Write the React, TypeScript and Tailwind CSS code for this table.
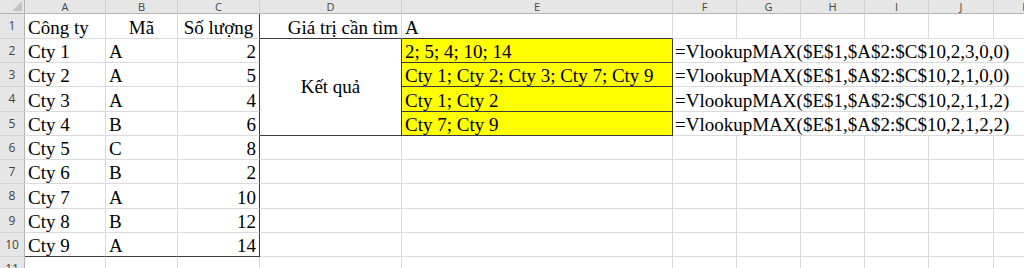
// Bảng tính Excel: VlookupMAX
const cols = ['A', 'B', 'C', 'D', 'E', 'F', 'G', 'H', 'I', 'J', 'K'];

const table: [string, string, string][] = [
  ['Cty 1', 'A', '2'],
  ['Cty 2', 'A', '5'],
  ['Cty 3', 'A', '4'],
  ['Cty 4', 'B', '6'],
  ['Cty 5', 'C', '8'],
  ['Cty 6', 'B', '2'],
  ['Cty 7', 'A', '10'],
  ['Cty 8', 'B', '12'],
  ['Cty 9', 'A', '14'],
];

const results = [
  '2; 5; 4; 10; 14',
  'Cty 1; Cty 2; Cty 3; Cty 7; Cty 9',
  'Cty 1; Cty 2',
  'Cty 7; Cty 9',
];

const formulas = [
  '=VlookupMAX($E$1,$A$2:$C$10,2,3,0,0)',
  '=VlookupMAX($E$1,$A$2:$C$10,2,1,0,0)',
  '=VlookupMAX($E$1,$A$2:$C$10,2,1,1,2)',
  '=VlookupMAX($E$1,$A$2:$C$10,2,1,2,2)',
];

const hdrFont = { fontFamily: '"Open Sans", "Liberation Sans", sans-serif' };
const cell = 'flex items-end px-[3px] border-r border-b border-[#dadada] whitespace-nowrap leading-[20px]';
const rowHdr =
  'flex items-center justify-center bg-[#e6e6e6] border-r border-b border-[#d0d0d0] border-r-[#b4b4b4] text-[12px] text-[#444]';

function Empty({ extra = '' }: { extra?: string }) {
  return <div className={`${cell} ${extra}`} />;
}

export default function App() {
  return (
    <div className="w-[1024px] h-[268px] overflow-hidden bg-white">
      <div
        className="grid grid-cols-[25px_81px_72px_82px_142px_271px_64px_64px_64px_64px_65px_64px] grid-rows-[14px_25px_24px_24px_25px_24px_24px_24px_25px_24px_24px_24px] w-[1058px] bg-white text-[19px] text-black"
        style={{ fontFamily: '"Liberation Serif", "Times New Roman", serif' }}
      >
        {/* Góc trên trái */}
        <div className="relative bg-[#e6e6e6] border-r border-b border-[#b4b4b4]">
          <svg className="absolute right-[2px] bottom-[2px]" width="10" height="10" viewBox="0 0 10 10">
            <polygon points="10,0 10,10 0,10" fill="#c4c4c4" />
          </svg>
        </div>
        {cols.map((c) => (
          <div
            key={c}
            className="flex items-center justify-center bg-[#e6e6e6] border-r border-b border-[#d0d0d0] border-b-[#b4b4b4] text-[11px] leading-[12px] text-[#444]"
            style={hdrFont}
          >
            {c}
          </div>
        ))}

        {/* Hàng 1 */}
        <div className={rowHdr} style={hdrFont}>1</div>
        <div className={cell}>Công ty</div>
        <div className={`${cell} justify-center`}>Mã</div>
        <div className={`${cell} justify-center border-r-[#3a3a3a]`}>Số lượng</div>
        <div className={`${cell} justify-end border-b-[#3a3a3a]`}>Giá trị cần tìm</div>
        <div className={`${cell} border-b-[#3a3a3a]`}>A</div>
        {['F', 'G', 'H', 'I', 'J', 'K'].map((c) => (
          <Empty key={c} />
        ))}

        {/* Hàng 2-10 */}
        {table.map(([name, code, qty], i) => {
          const r = i + 2;
          const bottom = r === 10 ? 'border-b-[#3a3a3a]' : '';
          return (
            <>
              <div key={`h${r}`} className={rowHdr} style={hdrFont}>
                {r}
              </div>
              <div className={`${cell} ${bottom}`}>{name}</div>
              <div className={`${cell} ${bottom}`}>{code}</div>
              <div className={`${cell} justify-end border-r-[#3a3a3a] ${bottom}`}>{qty}</div>
              {r === 2 && (
                <div className="row-span-4 flex items-center justify-center border-r border-b border-[#3a3a3a] leading-[20px]">
                  Kết quả
                </div>
              )}
              {r <= 5 ? (
                <>
                  <div className={`${cell} bg-[#ffff00] border-r-[#3a3a3a] border-b-[#3a3a3a]`}>
                    {results[r - 2]}
                  </div>
                  <div className={`${cell} col-span-6 pl-[2px]`}>{formulas[r - 2]}</div>
                </>
              ) : (
                <>
                  <Empty />
                  <Empty />
                  {['F', 'G', 'H', 'I', 'J', 'K'].map((c) => (
                    <Empty key={c} />
                  ))}
                </>
              )}
            </>
          );
        })}

        {/* Hàng 11 */}
        <div className={rowHdr} style={hdrFont}>11</div>
        {cols.map((c) => (
          <Empty key={c} />
        ))}
      </div>
    </div>
  );
}
